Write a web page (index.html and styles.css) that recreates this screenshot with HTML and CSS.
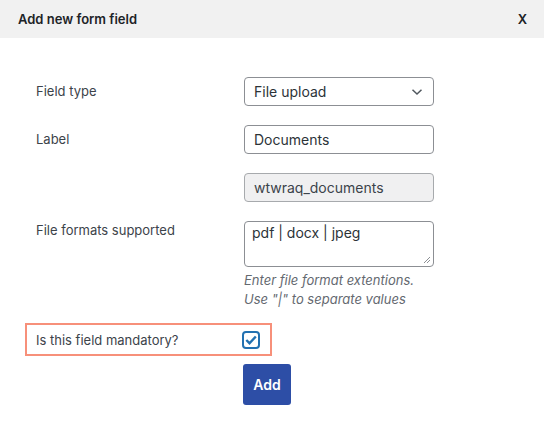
FILE: index.html
```html
<!DOCTYPE html>
<html>
<head>
<meta charset="utf-8">
<link rel="stylesheet" href="styles.css">
</head>
<body>
<div class="modal">
  <div class="head">
    <span class="title">Add new form field</span>
    <span class="close">X</span>
  </div>
  <div class="body">
    <div class="row">
      <div class="lbl">Field type</div>
      <div class="ctl">
        <div class="select">
          <span>File upload</span>
          <svg width="12" height="8" viewBox="0 0 12 8"><path d="M1.5 1.8 L6 6 L10.5 1.8" fill="none" stroke="#50575e" stroke-width="1.5"/></svg>
        </div>
      </div>
    </div>
    <div class="row">
      <div class="lbl">Label</div>
      <div class="ctl"><div class="input">Documents</div></div>
    </div>
    <div class="row">
      <div class="lbl"></div>
      <div class="ctl"><div class="input disabled">wtwraq_documents</div></div>
    </div>
    <div class="row last">
      <div class="lbl ta">File formats supported</div>
      <div class="ctl">
        <div class="textarea">pdf | docx | jpeg
          <svg class="grip" width="8" height="8" viewBox="0 0 8 8"><path d="M7 1 L1 7 M7 4 L4 7" stroke="#8c8f94" stroke-width="1"/></svg>
        </div>
        <div class="hint">Enter file format extentions.<br>Use "|" to separate values</div>
      </div>
    </div>
    <div class="mandatory">
      <div class="mlbl">Is this field mandatory?</div>
      <div class="check">
        <svg width="12" height="10" viewBox="0 0 12 10"><path d="M1.3 5 L4.5 8.2 L10.8 1.5" fill="none" stroke="#2271b1" stroke-width="2.4"/></svg>
      </div>
    </div>
    <div class="actions">
      <button class="add">Add</button>
    </div>
  </div>
</div>
</body>
</html>
```
FILE: styles.css
```css
* { box-sizing: border-box; }
html, body { margin: 0; background: #fff; }
body {
  font-family: Inter, "Liberation Sans", sans-serif;
  font-size: 13px;
  color: #3c434a;
}
.head {
  height: 38px;
  background: #f1f1f1;
  display: flex;
  align-items: center;
  justify-content: space-between;
  padding: 0 17px 0 18px;
}
.title { font-weight: 600; font-size: 13px; color: #1d2327; }
.close { font-weight: 600; font-size: 13px; color: #1d2327; }
.body { padding-top: 39px; }
.row { display: flex; margin-bottom: 19px; }
.row.last { margin-bottom: 14px; }
.lbl { width: 244px; padding-left: 36px; line-height: 29px; }
.lbl.ta { line-height: 19px; padding-top: 0; }
.ctl { width: 190px; }
.select, .input {
  height: 29px;
  border: 1px solid #8c8f94;
  border-radius: 4px;
  padding: 0 8px 0 9px;
  display: flex;
  align-items: center;
  font-size: 14px;
  color: #2c3338;
}
.select { justify-content: space-between; padding-right: 10px; }
.input.disabled { background: #f0f0f1; border-color: #a7aaad; color: #3c434a; }
.textarea {
  position: relative;
  height: 46px;
  border: 1px solid #8c8f94;
  border-radius: 4px;
  padding: 1px 7px;
  font-size: 14px;
  color: #2c3338;
  line-height: 20px;
}
.grip { position: absolute; right: 2px; bottom: 2px; }
.hint {
  margin-top: 4px;
  font-style: italic;
  color: #646970;
  line-height: 19px;
}
.mandatory {
  margin-left: 25px;
  width: 247px;
  height: 33px;
  border: 2px solid #f7907a;
  display: flex;
  align-items: center;
  justify-content: space-between;
  padding: 0 10px 0 9px;
}
.check {
  width: 18px;
  height: 18px;
  border: 2px solid #2271b1;
  border-radius: 4px;
  display: flex;
  align-items: center;
  justify-content: center;
}
.actions { padding-left: 243px; margin-top: 8px; }
.add {
  width: 48px;
  height: 41px;
  background: #2d4ea6;
  color: #fff;
  border: none;
  border-radius: 3px;
  font-family: inherit;
  font-size: 14px;
  font-weight: 600;
}
```
